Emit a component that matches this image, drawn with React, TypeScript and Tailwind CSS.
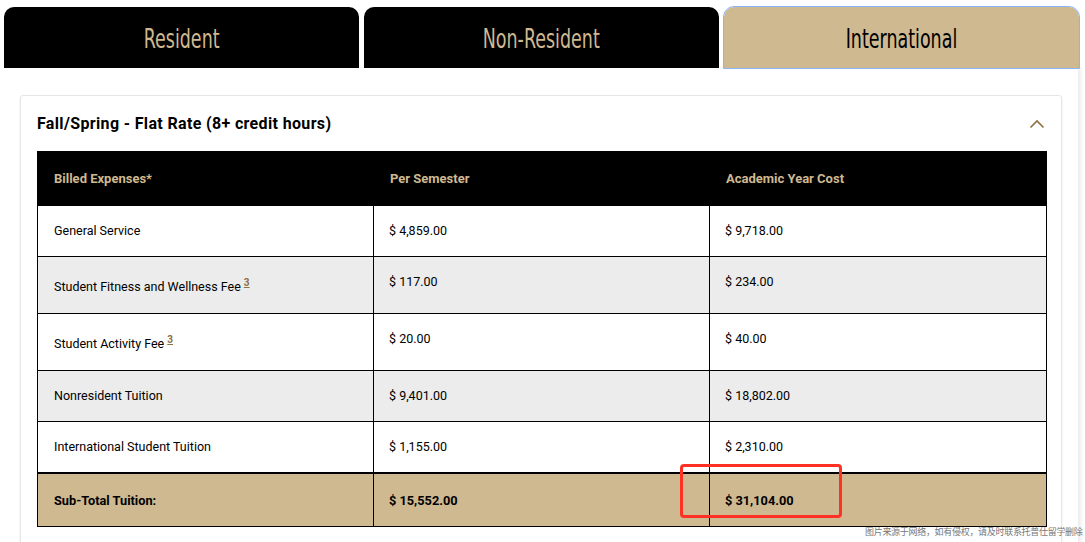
import React from "react";

const rows = [
  { name: "General Service", sup: false, a: "$ 4,859.00", b: "$ 9,718.00" },
  { name: "Student Fitness and Wellness Fee", sup: true, a: "$ 117.00", b: "$ 234.00" },
  { name: "Student Activity Fee", sup: true, a: "$ 20.00", b: "$ 40.00" },
  { name: "Nonresident Tuition", sup: false, a: "$ 9,401.00", b: "$ 18,802.00" },
  { name: "International Student Tuition", sup: false, a: "$ 1,155.00", b: "$ 2,310.00" },
];

function Tab({ label, active }: { label: string; active?: boolean }) {
  return (
    <div
      className={
        active
          ? "h-[61px] pt-[3px] rounded-t-[10px] bg-[#cfb991] text-black flex items-center justify-center outline outline-1 outline-[#8ab4f8]"
          : "h-[61px] pt-[3px] rounded-t-[10px] bg-black text-[#cfb991] flex items-center justify-center"
      }
    >
      <span
        className="text-[27px] inline-block scale-x-[0.72]"
        style={{ fontFamily: "'DejaVu Sans Condensed', 'Liberation Sans Narrow', 'Roboto', sans-serif" }}
      >
        {label}
      </span>
    </div>
  );
}

export default function App() {
  return (
    <div
      className="w-[1085px] h-[542px] bg-white relative overflow-hidden text-black"
      style={{ fontFamily: "Roboto, 'Liberation Sans', sans-serif" }}
    >
      <div className="pt-[7px] pl-[4px] w-[1079px] grid grid-cols-3 gap-x-[5.5px]">
        <Tab label="Resident" />
        <Tab label="Non-Resident" />
        <Tab label="International" active />
      </div>
      <div className="ml-[4px] w-[1074px] h-[480px] bg-white pt-[27px] px-[16px] shadow-[3px_0_4px_rgba(0,0,0,0.08)]">
        <div className="border border-[#e6e6e6] rounded-[3px] shadow-[0_1px_3px_rgba(0,0,0,0.08)] pb-[60px]">
          <div className="h-[55px] flex items-center justify-between pl-[16px] pr-[16px]">
            <span className="text-[16px] font-bold tracking-[0.35px]">Fall/Spring - Flat Rate (8+ credit hours)</span>
            <svg width="16" height="10" viewBox="0 0 16 10" fill="none">
              <path d="M1.5 8.5 L8 2 L14.5 8.5" stroke="#8e6f3e" strokeWidth="1.6" />
            </svg>
          </div>
          <div className="px-[16px]">
            <table className="w-[1009px] border-collapse text-[12.5px] table-fixed">
              <colgroup>
                <col className="w-[336px]" />
                <col className="w-[336px]" />
                <col className="w-[337px]" />
              </colgroup>
              <thead>
                <tr className="bg-black text-[#cfb991] text-[13px]">
                  <th className="text-left pl-[16px] py-[18px] leading-[17px] border border-black font-bold">Billed Expenses*</th>
                  <th className="text-left pl-[16px] py-[18px] leading-[17px] border border-black font-bold">Per Semester</th>
                  <th className="text-left pl-[16px] py-[18px] leading-[17px] border border-black font-bold">Academic Year Cost</th>
                </tr>
              </thead>
              <tbody>
                {rows.map((r, i) => (
                  <tr key={r.name} className={i % 2 === 1 ? "bg-[#ececec]" : "bg-white"}>
                    <td
                      className={
                        r.sup
                          ? "pl-[16px] pt-[22px] pb-[17px] leading-[16px] border border-black align-top"
                          : "pl-[16px] pt-[17px] pb-[17px] leading-[16px] border border-black align-top"
                      }
                    >
                      {r.name}
                      {r.sup && (
                        <span className="relative -top-[5px] ml-[3px] text-[10px] font-bold text-[#8e6f3e] underline">3</span>
                      )}
                    </td>
                    <td className="pl-[15px] pt-[17px] pb-[17px] leading-[16px] border border-black align-top">{r.a}</td>
                    <td className="pl-[15px] pt-[17px] pb-[17px] leading-[16px] border border-black align-top">{r.b}</td>
                  </tr>
                ))}
                <tr className="bg-[#cfb991] font-bold text-[12.75px]">
                  <td className="pl-[16px] pt-[18px] pb-[17px] leading-[17px] border border-black border-t-2">Sub-Total Tuition:</td>
                  <td className="pl-[15px] pt-[18px] pb-[17px] leading-[17px] border border-black border-t-2">$ 15,552.00</td>
                  <td className="pl-[15px] pt-[18px] pb-[17px] leading-[17px] border border-black border-t-2">$ 31,104.00</td>
                </tr>
              </tbody>
            </table>
          </div>
        </div>
      </div>
      <div className="absolute left-[680px] top-[464px] w-[162px] h-[54px] border-[3px] border-[#ff3124] rounded-[4px]" />
      <div
        className="absolute left-[865px] top-[525px] text-[9px] tracking-[-0.3px] text-[#777] whitespace-nowrap"
        style={{ fontFamily: "'Noto Sans CJK SC', sans-serif" }}
      >
        图片来源于网络，如有侵权，请及时联系托普仕留学删除
      </div>
    </div>
  );
}
